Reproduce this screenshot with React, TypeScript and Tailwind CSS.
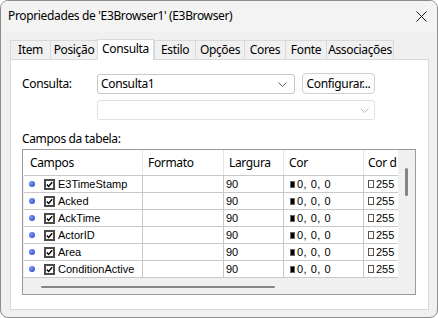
import React from "react";

const tabs = [
  { name: "Item", w: "w-[40px]" },
  { name: "Posição", w: "w-[47px]" },
  { name: "Consulta", w: "w-[57px]", active: true },
  { name: "Estilo", w: "w-[41px]" },
  { name: "Opções", w: "w-[49px]" },
  { name: "Cores", w: "w-[41px]" },
  { name: "Fonte", w: "w-[41px]" },
  { name: "Associações", w: "w-[68px]" },
];

const fields = ["E3TimeStamp", "Acked", "AckTime", "ActorID", "Area", "ConditionActive"];

function Chevron({ color }: { color: string }) {
  return (
    <svg width="9" height="5" viewBox="0 0 9 5" className="shrink-0">
      <path d="M0.5 0.5 L4.5 4.5 L8.5 0.5" fill="none" stroke={color} strokeWidth="1" />
    </svg>
  );
}

function Check() {
  return (
    <span className="w-[11px] h-[11px] border-2 border-[#4a4a4a] bg-white flex items-center justify-center shrink-0">
      <svg width="7" height="7" viewBox="0 0 7 7">
        <path d="M0.8 3.6 L2.6 5.4 L6.2 1.2" fill="none" stroke="#000" strokeWidth="1.4" />
      </svg>
    </span>
  );
}

export default function App() {
  return (
    <div className="w-[438px] h-[318px] bg-white">
      <div className="w-[438px] h-[318px] rounded-[8px] border border-[#8c8c8c] bg-[#f0f0f0] overflow-hidden flex flex-col font-['Segoe_UI','Noto_Sans',sans-serif] text-[12px] tracking-[-0.35px] text-black">
        {/* Title bar */}
        <div className="h-[30px] shrink-0 bg-[#f3f3f3] flex items-center justify-between pl-[7px] pr-[10px]">
          <span>Propriedades de 'E3Browser1' (E3Browser)</span>
          <svg width="11" height="11" viewBox="0 0 11 11">
            <path d="M0.5 0.5 L10.5 10.5 M10.5 0.5 L0.5 10.5" stroke="#1a1a1a" strokeWidth="1" />
          </svg>
        </div>

        <div className="pl-[9px] pt-[7px]">
          {/* Tabs */}
          <div className="flex items-end h-[21px]">
            {tabs.map((t, i) =>
              t.active ? (
                <div
                  key={t.name}
                  className={`${t.w} h-[21px] -mb-px relative z-10 bg-white border border-b-0 border-[#d9d9d9] flex items-center justify-center pb-[3px]`}
                >
                  {t.name}
                </div>
              ) : (
                <div
                  key={t.name}
                  className={`${t.w} h-[19px] bg-[#f0f0f0] border-t border-l border-[#d9d9d9] ${i === tabs.length - 1 ? "border-r" : ""} flex items-center justify-center`}
                >
                  {t.name}
                </div>
              )
            )}
          </div>

          {/* Page */}
          <div className="w-[419px] h-[251px] bg-white border border-[#d9d9d9] pl-[11px] pt-[13px]">
            <div className="flex items-start">
              <span className="w-[75px] pt-[2px]">Consulta:</span>
              <div className="w-[198px] h-[20px] mt-[1px] border border-[#c8c8c8] rounded-[3px] bg-white flex items-center justify-between pl-[3px] pr-[7px]">
                <span>Consulta1</span>
                <Chevron color="#606060" />
              </div>
              <button className="ml-[7px] w-[73px] h-[21px] border border-[#d0d0d0] rounded-[4px] bg-[#fdfdfd] flex items-center justify-center">
                Configurar...
              </button>
            </div>
            <div className="ml-[75px] mt-[6px] w-[278px] h-[20px] border border-[#e0e0e0] rounded-[3px] bg-white flex items-center justify-end pr-[5px]">
              <Chevron color="#b8b8b8" />
            </div>
            <div className="mt-[11px] h-[16px] leading-[16px]">Campos da tabela:</div>

            {/* Table */}
            <div className="mt-[2px] w-[394px] h-[146px] border border-[#9a9a9a] bg-[#f0f0f0] flex">
              <div className="w-[375px] flex flex-col overflow-hidden">
                <div className="h-[25px] bg-white flex shrink-0">
                  <div className="w-[120px] border-r border-[#e5e5e5] pl-[7px] flex items-center">Campos</div>
                  <div className="w-[81px] border-r border-[#e5e5e5] pl-[5px] flex items-center">Formato</div>
                  <div className="w-[60px] border-r border-[#e5e5e5] pl-[5px] flex items-center">Largura</div>
                  <div className="w-[80px] border-r border-[#e5e5e5] pl-[5px] flex items-center">Cor</div>
                  <div className="w-[34px] pl-[4px] flex items-center whitespace-nowrap overflow-hidden">Cor d</div>
                </div>
                <div className="pl-[1px] font-['Liberation_Sans',sans-serif] text-[11px] tracking-normal border-b border-[#c8c8c8]">
                  {fields.map((f) => (
                    <div key={f} className="h-[17px] border-t border-[#c8c8c8] bg-white flex">
                      <div className="w-[119px] border-r border-[#c8c8c8] flex items-center">
                        <span className="ml-[5px] w-[6px] h-[6px] rounded-full bg-[radial-gradient(circle_at_35%_35%,#7f9cff,#1f3bb8)] shrink-0" />
                        <span className="ml-[9px]">
                          <Check />
                        </span>
                        <span className="ml-[3px] whitespace-nowrap">{f}</span>
                      </div>
                      <div className="w-[81px] border-r border-[#c8c8c8]" />
                      <div className="w-[60px] border-r border-[#c8c8c8] pl-[2px] flex items-center">90</div>
                      <div className="w-[80px] border-r border-[#c8c8c8] pl-[6px] flex items-center">
                        <span className="w-[5px] h-[7px] bg-black border border-[#666] shrink-0" />
                        <span className="ml-[2px] tracking-[0.5px]">0, 0, 0</span>
                      </div>
                      <div className="w-[34px] pl-[4px] flex items-center overflow-hidden whitespace-nowrap">
                        <span className="w-[6px] h-[8px] border border-[#555] bg-white shrink-0" />
                        <span className="ml-[2px]">255</span>
                      </div>
                    </div>
                  ))}
                </div>
                <div className="flex-1 relative">
                  <div className="absolute left-[18px] top-[8px] w-[234px] h-[2px] bg-[#858585] rounded-full" />
                </div>
              </div>
              <div className="w-[17px] relative">
                <div className="absolute left-[7px] top-[18px] w-[3px] h-[28px] bg-[#858585] rounded-full" />
              </div>
            </div>
          </div>
        </div>
      </div>
    </div>
  );
}
